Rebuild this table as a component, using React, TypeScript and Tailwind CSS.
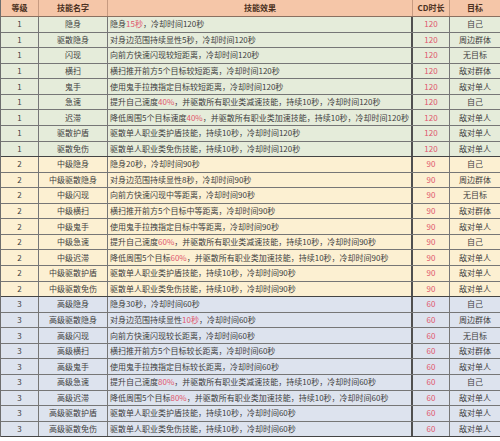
import React from 'react';

type Row = {
  level: string;
  name: string;
  effect: React.ReactNode;
  cd: string;
  target: string;
};

const Red = ({ children }: { children: React.ReactNode }) => (
  <span className="text-[#e0566c]">{children}</span>
);

function buildRows(
  level: string,
  prefix: string,
  cd: string,
  vals: { hide: string; reveal: string; dist: string; speed: string; slowWord: string },
  hideRed: boolean,
  revealRed: boolean,
): Row[] {
  return [
    {
      level,
      name: prefix + '隐身',
      effect: (
        <>
          隐身{hideRed ? <Red>{vals.hide}秒</Red> : vals.hide + '秒'}，冷却时间{cd}秒
        </>
      ),
      cd,
      target: '自己',
    },
    {
      level,
      name: prefix + '驱散隐身',
      effect: (
        <>
          对身边范围持续显性{revealRed ? <Red>{vals.reveal}秒</Red> : vals.reveal + '秒'}，冷却时间{cd}秒
        </>
      ),
      cd,
      target: '周边群体',
    },
    { level, name: prefix + '闪现', effect: `向前方快速闪现${vals.dist}距离，冷却时间${cd}秒`, cd, target: '无目标' },
    { level, name: prefix + '横扫', effect: `横扫推开前方5个目标${vals.dist}距离，冷却时间${cd}秒`, cd, target: '敌对群体' },
    { level, name: prefix + '鬼手', effect: `使用鬼手拉拽指定目标${vals.dist}距离，冷却时间${cd}秒`, cd, target: '敌对单人' },
    {
      level,
      name: prefix + '急速',
      effect: (
        <>
          提升自己速度<Red>{vals.speed}%</Red>，并驱散所有职业类减速技能，持续10秒，冷却时间{cd}秒
        </>
      ),
      cd,
      target: '自己',
    },
    {
      level,
      name: prefix + '迟滞',
      effect: (
        <>
          降低周围5个目标{vals.slowWord}<Red>{vals.speed}%</Red>，并驱散所有职业类加速技能，持续10秒，冷却时间{cd}秒
        </>
      ),
      cd,
      target: '敌对单人',
    },
    { level, name: prefix + '驱散护盾', effect: `驱散单人职业类护盾技能，持续10秒，冷却时间${cd}秒`, cd, target: '敌对单人' },
    { level, name: prefix + '驱散免伤', effect: `驱散单人职业类免伤技能，持续10秒，冷却时间${cd}秒`, cd, target: '敌对单人' },
  ];
}

const groups = [
  {
    bg: 'bg-[#e5ecda]',
    rows: buildRows('1', '', '120', { hide: '15', reveal: '5', dist: '较短', speed: '40', slowWord: '速度' }, true, false),
  },
  {
    bg: 'bg-[#fcf0d2]',
    rows: buildRows('2', '中级', '90', { hide: '20', reveal: '8', dist: '中等', speed: '60', slowWord: '' }, false, false),
  },
  {
    bg: 'bg-[#dde3ee]',
    rows: buildRows('3', '高级', '60', { hide: '30', reveal: '10', dist: '较长', speed: '80', slowWord: '' }, false, true),
  },
];

const cols = 'grid grid-cols-[38px_69px_305px_37px_51px]';

export default function App() {
  return (
    <div
      className="w-[500px] h-[441px] bg-white text-[8px] leading-none text-[#404040]"
      style={{ fontFamily: '"Noto Sans CJK SC", "Noto Sans", sans-serif' }}
    >
      <div className="border-l border-[#6e6e6e]">
        {/* header */}
        <div className={`${cols} h-[17px] bg-[#f5c6a8] font-bold text-[#4a3020] border-b border-[#8a7060]`}>
          <div className="flex items-center justify-center border-r border-[#c79a80]">等级</div>
          <div className="flex items-center justify-center border-r border-[#c79a80]">技能名字</div>
          <div className="flex items-center justify-center border-r border-[#c79a80]">技能效果</div>
          <div className="flex items-center justify-center border-r border-[#c79a80]">CD时长</div>
          <div className="flex items-center justify-center border-r border-[#c79a80]">目标</div>
        </div>

        {groups.map((g, gi) => (
          <div key={gi} className={g.bg}>
            {g.rows.map((r, i) => (
              <div
                key={i}
                className={`${cols} h-[15.57px] border-b ${
                  i === g.rows.length - 1 ? 'border-[#444]' : 'border-[#767676]'
                }`}
              >
                <div className="flex items-center justify-center border-r border-[#767676]">{r.level}</div>
                <div className="flex items-center justify-center border-r border-[#767676]">{r.name}</div>
                <div className="flex items-center pl-[2px] border-r-2 border-[#505050] whitespace-nowrap overflow-hidden">
                  {r.effect}
                </div>
                <div className="flex items-center justify-center border-r border-[#767676] text-[#e0566c]">{r.cd}</div>
                <div className="flex items-center justify-center border-r border-[#6e6e6e]">{r.target}</div>
              </div>
            ))}
          </div>
        ))}
      </div>
    </div>
  );
}
